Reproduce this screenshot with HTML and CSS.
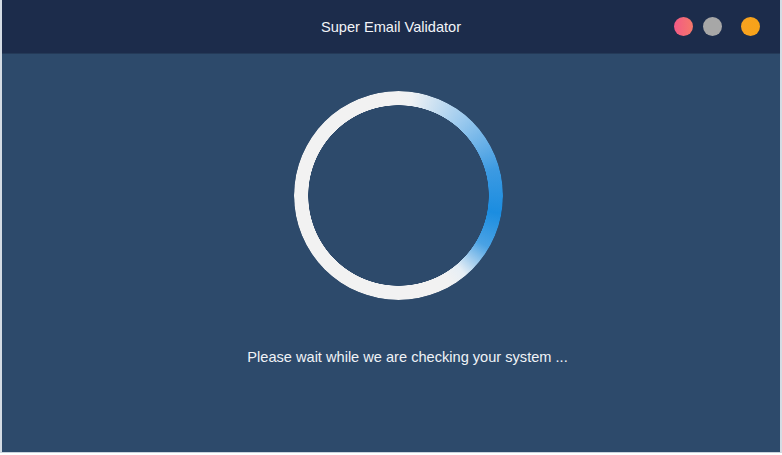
FILE: index.html
```html
<!DOCTYPE html>
<html lang="en">
  <head>
    <meta charset="UTF-8" />
    <meta name="viewport" content="width=device-width, initial-scale=1.0" />
    <title>Super Email Validator</title>
    <link rel="stylesheet" href="styles.css">
  </head>
  <body>
    <div class="window">
      <div class="titlebar">
        <div class="title">Super Email Validator</div>
        <div class="buttons">
          <span class="dot close"></span>
          <span class="dot min"></span>
          <span class="dot max"></span>
        </div>
      </div>
      <div class="content">
        <div class="spinner"></div>
        <div class="message">Please wait while we are checking your system ...</div>
      </div>
    </div>
  </body>
</html>
```

FILE: styles.css
```css
body {
  margin: 0;
  padding: 0;
  width: 782px;
  height: 455px;
  overflow: hidden;
  background: #ffffff;
  font-family: "Liberation Sans", Arial, sans-serif;
}

.window {
  height: 453px;
  box-sizing: border-box;
  border-left: 2px solid #d4dce4;
  border-right: 2px solid #d4dce4;
  border-bottom: 1px solid #c9d3dd;
  display: flex;
  flex-direction: column;
  background: #2d4a6b;
}

.titlebar {
  height: 53px;
  background: #1c2c4b;
  display: flex;
  align-items: center;
  justify-content: center;
  position: relative;
  border-bottom: 1px solid #243a58;
}

.title {
  color: #f2f4f8;
  font-size: 14.6px;
  margin-left: 0;
}

.buttons {
  position: absolute;
  right: 20px;
  top: 17px;
  display: flex;
  gap: 10px;
}

.dot {
  width: 19px;
  height: 19px;
  border-radius: 50%;
  display: block;
}

.close {
  background: linear-gradient(90deg, #f25a86, #f5786a);
}

.min {
  background: #a7a7a7;
}

.max {
  margin-left: 9px;
  background: linear-gradient(90deg, #f8a220, #f7a318);
}

.content {
  flex: 1;
  display: flex;
  flex-direction: column;
  align-items: center;
}

.spinner {
  margin-top: 37px;
  margin-left: 14px;
  width: 209px;
  height: 209px;
  border-radius: 50%;
  background: conic-gradient(
    #f2f2f2 0deg,
    #eef1f4 8deg,
    #9ccaee 40deg,
    #3c9ae2 75deg,
    #1b8de0 100deg,
    #4aa2e4 120deg,
    #e6eef5 140deg,
    #f2f2f2 150deg,
    #f2f2f2 360deg
  );
  -webkit-mask: radial-gradient(farthest-side, transparent calc(100% - 14.5px), #000 calc(100% - 14px));
  mask: radial-gradient(farthest-side, transparent calc(100% - 14.5px), #000 calc(100% - 14px));
}

.message {
  margin-top: 49px;
  margin-left: 33px;
  color: #f0f3f7;
  font-size: 14.6px;
}
```
